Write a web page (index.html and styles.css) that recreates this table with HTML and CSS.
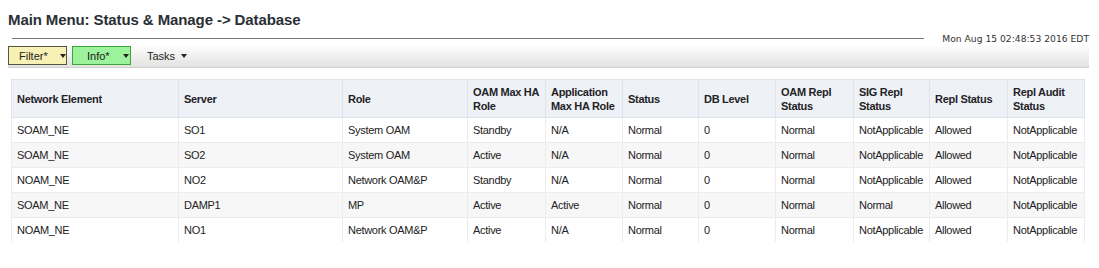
FILE: index.html
```html
<!DOCTYPE html>
<html>
<head>
<meta charset="utf-8">
<link rel="stylesheet" href="styles.css">
</head>
<body>
<div class="page">
  <h1 class="title">Main Menu: Status &amp; Manage -&gt; Database</h1>
  <div class="rule-row">
    <div class="rule"></div>
    <div class="date">Mon Aug 15 02:48:53 2016 EDT</div>
  </div>
  <div class="toolbar">
    <button class="btn btn-filter">Filter* <span class="caret"></span></button>
    <button class="btn btn-info">Info* <span class="caret"></span></button>
    <div class="menu">Tasks <span class="caret"></span></div>
  </div>
  <div class="table-wrap">
    <table class="grid">
      <colgroup>
        <col style="width:167px"><col style="width:164px"><col style="width:125px"><col style="width:78px"><col style="width:77px"><col style="width:76px"><col style="width:77px"><col style="width:78px"><col style="width:76px"><col style="width:78px"><col style="width:77px">
      </colgroup>
      <thead>
        <tr>
          <th>Network Element</th><th>Server</th><th>Role</th><th>OAM Max HA Role</th><th>Application Max HA Role</th><th>Status</th><th>DB Level</th><th>OAM Repl Status</th><th>SIG Repl Status</th><th>Repl Status</th><th>Repl Audit Status</th>
        </tr>
      </thead>
      <tbody>
        <tr><td>SOAM_NE</td><td>SO1</td><td>System OAM</td><td>Standby</td><td>N/A</td><td>Normal</td><td>0</td><td>Normal</td><td>NotApplicable</td><td>Allowed</td><td>NotApplicable</td></tr>
        <tr><td>SOAM_NE</td><td>SO2</td><td>System OAM</td><td>Active</td><td>N/A</td><td>Normal</td><td>0</td><td>Normal</td><td>NotApplicable</td><td>Allowed</td><td>NotApplicable</td></tr>
        <tr><td>NOAM_NE</td><td>NO2</td><td>Network OAM&amp;P</td><td>Standby</td><td>N/A</td><td>Normal</td><td>0</td><td>Normal</td><td>NotApplicable</td><td>Allowed</td><td>NotApplicable</td></tr>
        <tr><td>SOAM_NE</td><td>DAMP1</td><td>MP</td><td>Active</td><td>Active</td><td>Normal</td><td>0</td><td>Normal</td><td>Normal</td><td>Allowed</td><td>NotApplicable</td></tr>
        <tr><td>NOAM_NE</td><td>NO1</td><td>Network OAM&amp;P</td><td>Active</td><td>N/A</td><td>Normal</td><td>0</td><td>Normal</td><td>NotApplicable</td><td>Allowed</td><td>NotApplicable</td></tr>
      </tbody>
    </table>
  </div>
</div>
</body>
</html>
```

FILE: styles.css
```css
html, body {
  margin: 0;
  padding: 0;
  background: #ffffff;
}
.page {
  padding: 10px 10px 0 8px;
  font-family: "Liberation Sans", Arial, sans-serif;
  color: #222;
}
.title {
  margin: 0;
  font-size: 15px;
  font-weight: bold;
  color: #2a2f36;
  line-height: 20px;
  letter-spacing: -0.1px;
}
.rule-row {
  display: flex;
  align-items: center;
  margin: 2px 0 0 4px;
  height: 12px;
}
.rule {
  flex: 1;
  border-top: 1px solid #7a7a7a;
}
.date {
  margin-left: 18px;
  font-family: "DejaVu Sans", Verdana, sans-serif;
  font-size: 9.2px;
  color: #333;
  white-space: nowrap;
}
.toolbar {
  display: flex;
  align-items: center;
  gap: 5px;
  height: 23px;
  background: linear-gradient(#ffffff, #e2e2e2);
  border-bottom: 1px solid #d0d0d0;
}
.btn {
  height: 19px;
  padding: 0 7px 0 10px;
  font-family: "Liberation Sans", Arial, sans-serif;
  font-size: 11px;
  color: #222;
  display: flex;
  align-items: center;
  gap: 12px;
  cursor: pointer;
  border-radius: 0;
}
.btn-filter {
  width: 59px;
  background: #f8f1b6;
  border: 1px solid #5a5440;
}
.btn-info {
  width: 59px;
  background: #9cf39c;
  border: 1px solid #3aa63a;
  padding-left: 14px;
  gap: 13px;
}
.menu {
  margin-left: 11px;
  font-size: 11px;
  display: flex;
  align-items: center;
  gap: 6px;
}
.caret {
  display: inline-block;
  width: 0;
  height: 0;
  border-left: 3px solid transparent;
  border-right: 3px solid transparent;
  border-top: 4px solid #222;
}
.table-wrap {
  margin: 11px 0 0 3px;
  height: 163px;
  overflow: hidden;
  width: 1075px;
}
.grid {
  border-collapse: collapse;
  table-layout: fixed;
  width: 1073px;
  font-size: 11px;
  letter-spacing: -0.3px;
}
.grid th {
  background: #eef1f5;
  height: 37px;
  text-align: left;
  font-weight: bold;
  color: #1f2328;
  padding: 0 5px;
  line-height: 14px;
  border: 1px solid #dfe4ea;
  vertical-align: middle;
}
.grid td {
  height: 24px;
  padding: 0 5px;
  border-left: 1px solid #ececec;
  border-right: 1px solid #ececec;
  border-bottom: 1px solid #ececec;
  white-space: nowrap;
  color: #222;
}
.grid tbody tr:nth-child(even) td {
  background: #f7f7f7;
}
```
